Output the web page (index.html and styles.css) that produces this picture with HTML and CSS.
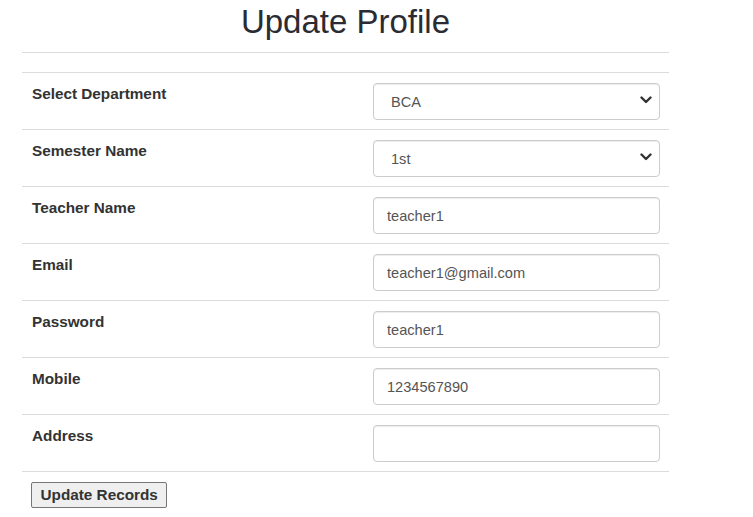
FILE: index.html
```html
<!DOCTYPE html>
<html>
<head>
<meta charset="utf-8">
<link rel="stylesheet" href="styles.css">
</head>
<body>
<div class="page">
  <h1 class="title">Update Profile</h1>
  <form class="form">
    <div class="head-row"></div>
    <div class="row">
      <label class="label">Select Department</label>
      <div class="select-wrap">
        <select class="field select"><option>BCA</option></select>
        <svg class="chev" width="12" height="8" viewBox="0 0 12 8"><polyline points="1.5,1.5 6,6 10.5,1.5" fill="none" stroke="#333" stroke-width="2.4" stroke-linecap="round" stroke-linejoin="round"/></svg>
      </div>
    </div>
    <div class="row">
      <label class="label">Semester Name</label>
      <div class="select-wrap">
        <select class="field select"><option>1st</option></select>
        <svg class="chev" width="12" height="8" viewBox="0 0 12 8"><polyline points="1.5,1.5 6,6 10.5,1.5" fill="none" stroke="#333" stroke-width="2.4" stroke-linecap="round" stroke-linejoin="round"/></svg>
      </div>
    </div>
    <div class="row">
      <label class="label">Teacher Name</label>
      <input class="field" type="text" value="teacher1">
    </div>
    <div class="row">
      <label class="label">Email</label>
      <input class="field" type="text" value="teacher1@gmail.com">
    </div>
    <div class="row">
      <label class="label">Password</label>
      <input class="field" type="text" value="teacher1">
    </div>
    <div class="row">
      <label class="label">Mobile</label>
      <input class="field" type="text" value="1234567890">
    </div>
    <div class="row">
      <label class="label">Address</label>
      <input class="field" type="text" value="">
    </div>
  </form>
  <button class="btn" type="button">Update Records</button>
</div>
</body>
</html>
```

FILE: styles.css
```css
html, body {
  margin: 0;
  padding: 0;
  background: #fff;
}
body {
  font-family: "Liberation Sans", Arial, sans-serif;
  color: #333;
}
.page {
  margin-left: 22px;
  width: 647px;
}
.title {
  margin: 4px 0 0;
  font-size: 33px;
  font-weight: normal;
  line-height: 36px;
  text-align: center;
  color: #2b2b33;
}
.form {
  margin-top: 12px;
  border-bottom: 1px solid #dcdcdc;
}
.head-row {
  border-top: 1px solid #dcdcdc;
  height: 19px;
}
.row {
  border-top: 1px solid #dcdcdc;
  display: grid;
  grid-template-columns: 331px 287px;
  column-gap: 10px;
  padding: 10px 9px 9px 10px;
  align-items: start;
}
.label {
  font-size: 15.3px;
  font-weight: bold;
  line-height: 21px;
  color: #333;
}
.field {
  box-sizing: border-box;
  width: 287px;
  height: 37px;
  margin: 0;
  border: 1px solid #ccc;
  border-radius: 4px;
  box-shadow: inset 0 1px 1px rgba(0,0,0,.075);
  padding: 0 13px;
  font-family: "Liberation Sans", Arial, sans-serif;
  font-size: 14.6px;
  color: #555;
  background: #fff;
  outline: none;
}
.select-wrap {
  position: relative;
  width: 287px;
  height: 37px;
}
.select {
  appearance: none;
  -webkit-appearance: none;
  padding-left: 17px;
  display: block;
}
.chev {
  position: absolute;
  right: 8px;
  top: 13px;
  pointer-events: none;
}
.btn {
  display: block;
  margin: 10px 0 0 9px;
  height: 26px;
  padding: 0 8.5px;
  font-family: "Liberation Sans", Arial, sans-serif;
  font-size: 15.3px;
  font-weight: bold;
  color: #333;
  background: #efefef;
  border: 1px solid #767676;
  border-radius: 2px;
}
```
